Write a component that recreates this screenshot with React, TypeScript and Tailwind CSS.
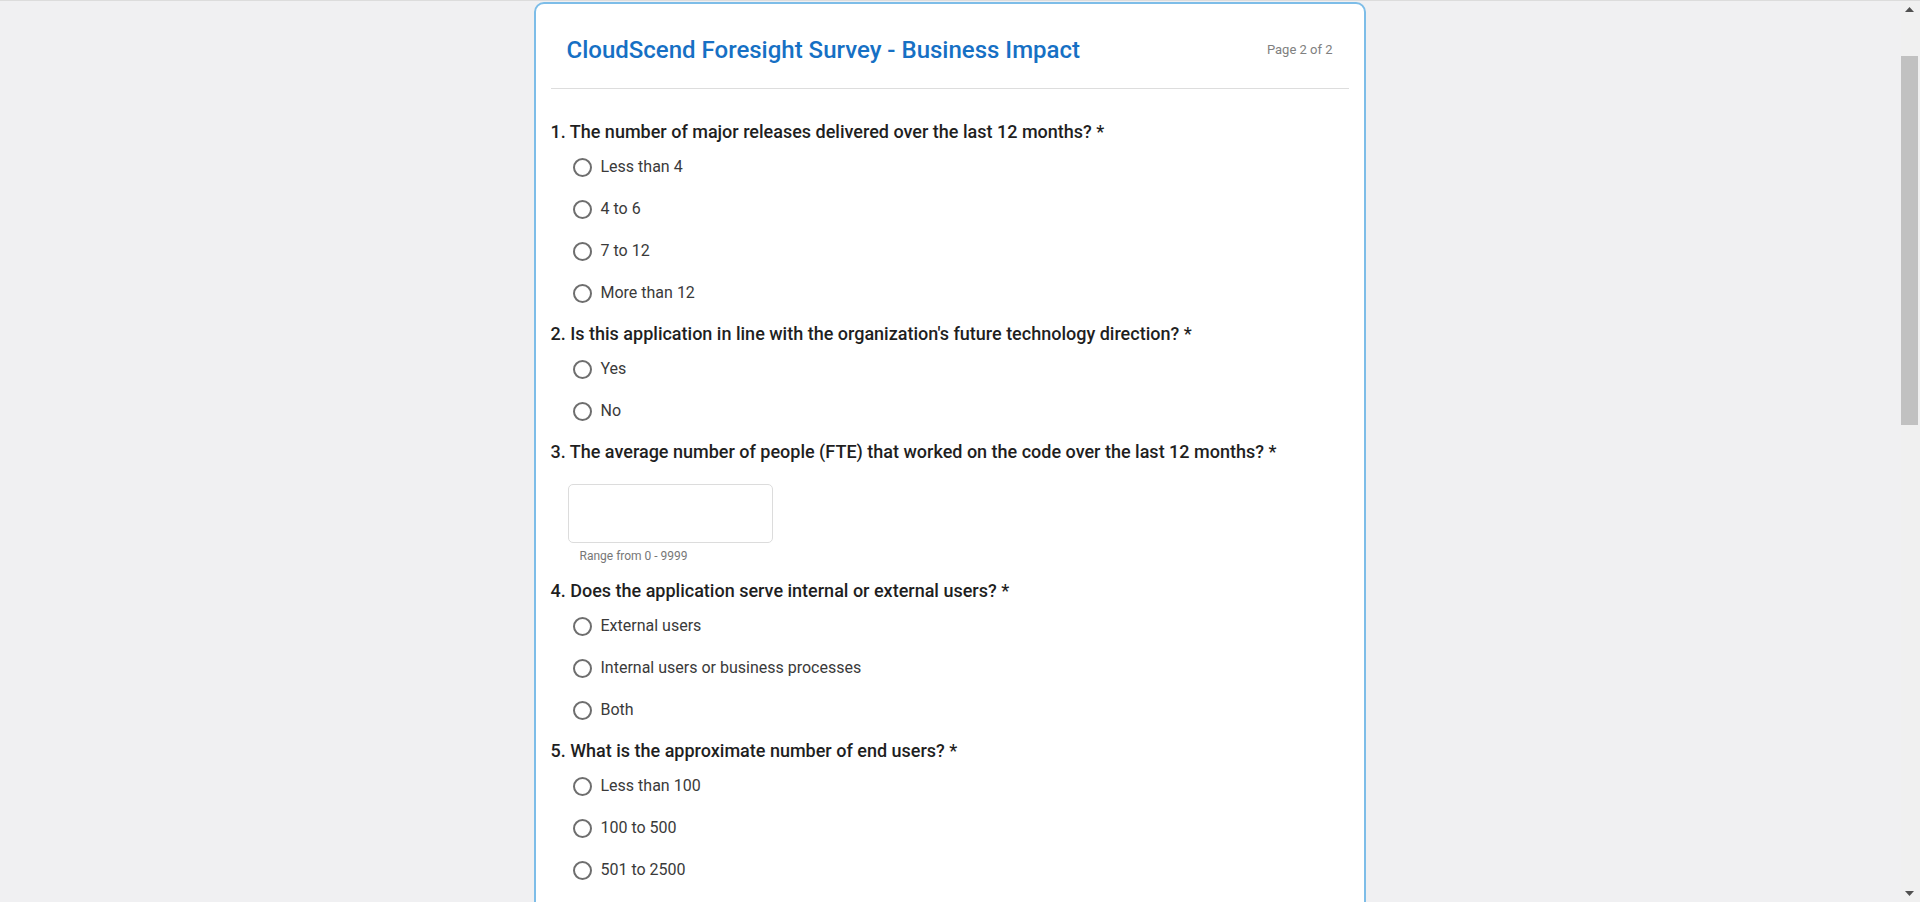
import React from "react";

type Q =
  | { kind: "radio"; title: string; options: string[] }
  | { kind: "number"; title: string; hint: string };

const questions: Q[] = [
  {
    kind: "radio",
    title: "1. The number of major releases delivered over the last 12 months? *",
    options: ["Less than 4", "4 to 6", "7 to 12", "More than 12"],
  },
  {
    kind: "radio",
    title: "2. Is this application in line with the organization's future technology direction? *",
    options: ["Yes", "No"],
  },
  {
    kind: "number",
    title: "3. The average number of people (FTE) that worked on the code over the last 12 months? *",
    hint: "Range from 0 - 9999",
  },
  {
    kind: "radio",
    title: "4. Does the application serve internal or external users? *",
    options: ["External users", "Internal users or business processes", "Both"],
  },
  {
    kind: "radio",
    title: "5. What is the approximate number of end users? *",
    options: ["Less than 100", "100 to 500", "501 to 2500", "2501 to 10000", "More than 10000"],
  },
  {
    kind: "radio",
    title: "6. How critical is this application to the business? *",
    options: ["Low", "Medium", "High", "Mission critical"],
  },
  {
    kind: "radio",
    title: "7. What is the expected impact of an outage of this application? *",
    options: ["Minimal", "Moderate", "Significant", "Severe"],
  },
  {
    kind: "radio",
    title: "8. Is this application subject to regulatory or compliance requirements? *",
    options: ["Yes", "No", "Not sure"],
  },
];

function Radio({ label }: { label: string }) {
  return (
    <label className="flex h-[42px] items-center pl-[22px] cursor-pointer">
      <span className="box-border h-[19px] w-[19px] shrink-0 rounded-full border-2 border-[#6e6e6e] bg-white" />
      <span className="ml-[9px] text-[16px] text-[#3a3a3a]">{label}</span>
    </label>
  );
}

function Scrollbar() {
  return (
    <div className="flex w-[19px] shrink-0 flex-col items-start bg-[#f0f0f0]">
      <div className="flex h-[17px] w-[17px] items-center justify-center">
        <svg width="9" height="5" viewBox="0 0 9 5">
          <path d="M0 5 L4.5 0 L9 5 Z" fill="#505050" />
        </svg>
      </div>
      <div className="flex w-[17px] flex-1 flex-col">
        <div className="h-[38px]" />
        <div className="h-[369px] w-[17px] bg-[#c1c1c1]" />
        <div className="flex-1" />
      </div>
      <div className="flex h-[17px] w-[17px] items-center justify-center">
        <svg width="9" height="5" viewBox="0 0 9 5">
          <path d="M0 0 L9 0 L4.5 5 Z" fill="#505050" />
        </svg>
      </div>
    </div>
  );
}

export default function App() {
  return (
    <div
      className="flex h-[902px] overflow-hidden border-t border-[#dcdcdc] bg-[#f0f0f2]"
      style={{ fontFamily: "Roboto, 'Noto Sans', 'Liberation Sans', sans-serif" }}
    >
      <main className="flex-1 overflow-hidden pr-[2px]">
        <div className="mx-auto mt-[1px] w-[832px] rounded-[10px] border-2 border-[#7dbde8] bg-white pb-10">
          <div className="flex h-[84px] items-center justify-between pt-[8px] pl-[31px] pr-[31px]">
            <h1 className="text-[24px] font-medium text-[#1670c4]">
              CloudScend Foresight Survey - Business Impact
            </h1>
            <span className="text-[13px] text-[#808080]">Page 2 of 2</span>
          </div>
          <div className="ml-[15px] mr-[15px] h-px bg-[#dddddd]" />
          <div className="flex flex-col gap-[7px] pl-[15px] pr-[17px] pt-[30px]">
            {questions.map((q, i) => (
              <div key={i} className="flex flex-col">
                <div className="flex h-[24px] items-center text-[18px] font-medium text-[#1f1f1f]">
                  {q.title}
                </div>
                {q.kind === "radio" ? (
                  <div className="mt-[3px] flex flex-col">
                    {q.options.map((o) => (
                      <Radio key={o} label={o} />
                    ))}
                  </div>
                ) : (
                  <div className="flex flex-col pl-[17px]">
                    <input
                      type="text"
                      className="mt-[21px] h-[59px] w-[205px] rounded-[5px] border border-[#dcdcdc] bg-white px-3 outline-none"
                    />
                    <span className="mt-[6px] mb-[8px] pl-[12px] text-[12px] leading-[14px] text-[#777777]">
                      {q.hint}
                    </span>
                  </div>
                )}
              </div>
            ))}
          </div>
        </div>
      </main>
      <Scrollbar />
    </div>
  );
}
